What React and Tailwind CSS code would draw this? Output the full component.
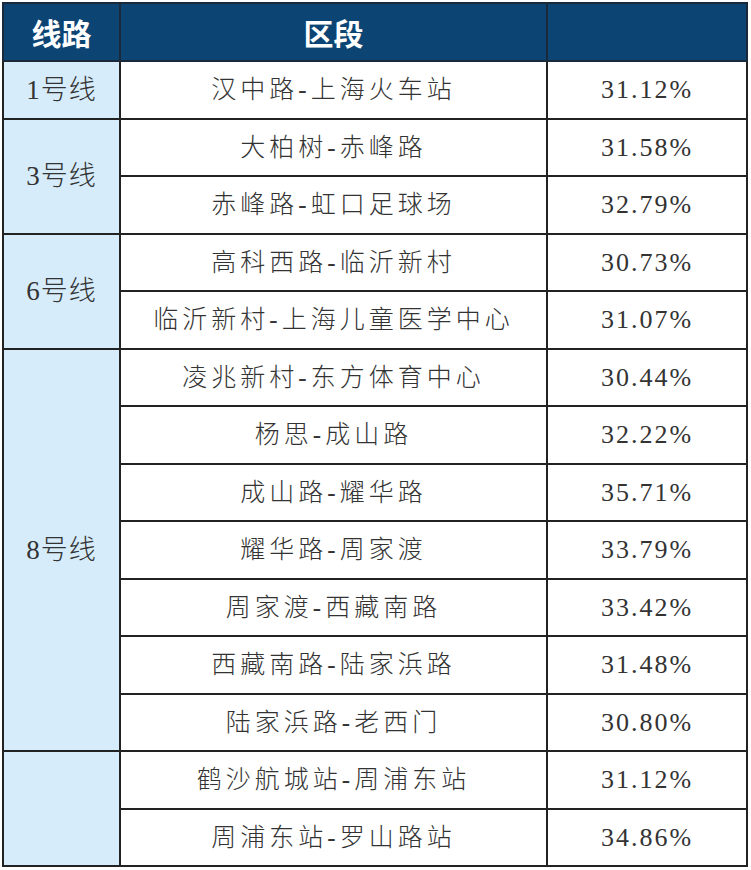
const groups = [
  { line: "1号线", rows: [["汉中路-上海火车站", "31.12%"]] },
  {
    line: "3号线",
    rows: [
      ["大柏树-赤峰路", "31.58%"],
      ["赤峰路-虹口足球场", "32.79%"],
    ],
  },
  {
    line: "6号线",
    rows: [
      ["高科西路-临沂新村", "30.73%"],
      ["临沂新村-上海儿童医学中心", "31.07%"],
    ],
  },
  {
    line: "8号线",
    rows: [
      ["凌兆新村-东方体育中心", "30.44%"],
      ["杨思-成山路", "32.22%"],
      ["成山路-耀华路", "35.71%"],
      ["耀华路-周家渡", "33.79%"],
      ["周家渡-西藏南路", "33.42%"],
      ["西藏南路-陆家浜路", "31.48%"],
      ["陆家浜路-老西门", "30.80%"],
    ],
  },
  {
    line: "",
    rows: [
      ["鹤沙航城站-周浦东站", "31.12%"],
      ["周浦东站-罗山路站", "34.86%"],
    ],
  },
];

const cjk = "font-['Liberation_Serif','Noto_Sans_CJK_SC',serif]";

export default function App() {
  return (
    <div className="min-h-[870px] w-[751px] bg-white pl-[2px] pt-[2px]">
      <table className={`w-[744px] table-fixed border-collapse text-[#333] ${cjk}`}>
        <colgroup>
          <col className="w-[117px]" />
          <col className="w-[427px]" />
          <col className="w-[200px]" />
        </colgroup>
        <thead>
          <tr className="h-[58px] bg-[#0c4574] text-white">
            <th className="border-2 border-[#1b2a3a] text-[30px] font-bold font-['Noto_Sans_CJK_SC',sans-serif]">
              线路
            </th>
            <th className="border-2 border-[#1b2a3a] text-[30px] font-bold font-['Noto_Sans_CJK_SC',sans-serif]">
              区段
            </th>
            <th className="border-2 border-[#1b2a3a]"></th>
          </tr>
        </thead>
        <tbody>
          {groups.map((g, gi) =>
            g.rows.map(([seg, pct], ri) => (
              <tr key={`${gi}-${ri}`} className="h-[57.5px]">
                {ri === 0 && (
                  <td
                    rowSpan={g.rows.length}
                    className="border-2 border-[#222] bg-[#d6ecfa] text-center text-[27px] font-light tracking-[1px]"
                  >
                    {g.line}
                  </td>
                )}
                <td className="border-2 border-[#222] text-center text-[25px] font-light tracking-[4px]">
                  {seg}
                </td>
                <td className="border-2 border-[#222] text-center text-[26px] tracking-[2px]">
                  {pct}
                </td>
              </tr>
            ))
          )}
        </tbody>
      </table>
    </div>
  );
}
